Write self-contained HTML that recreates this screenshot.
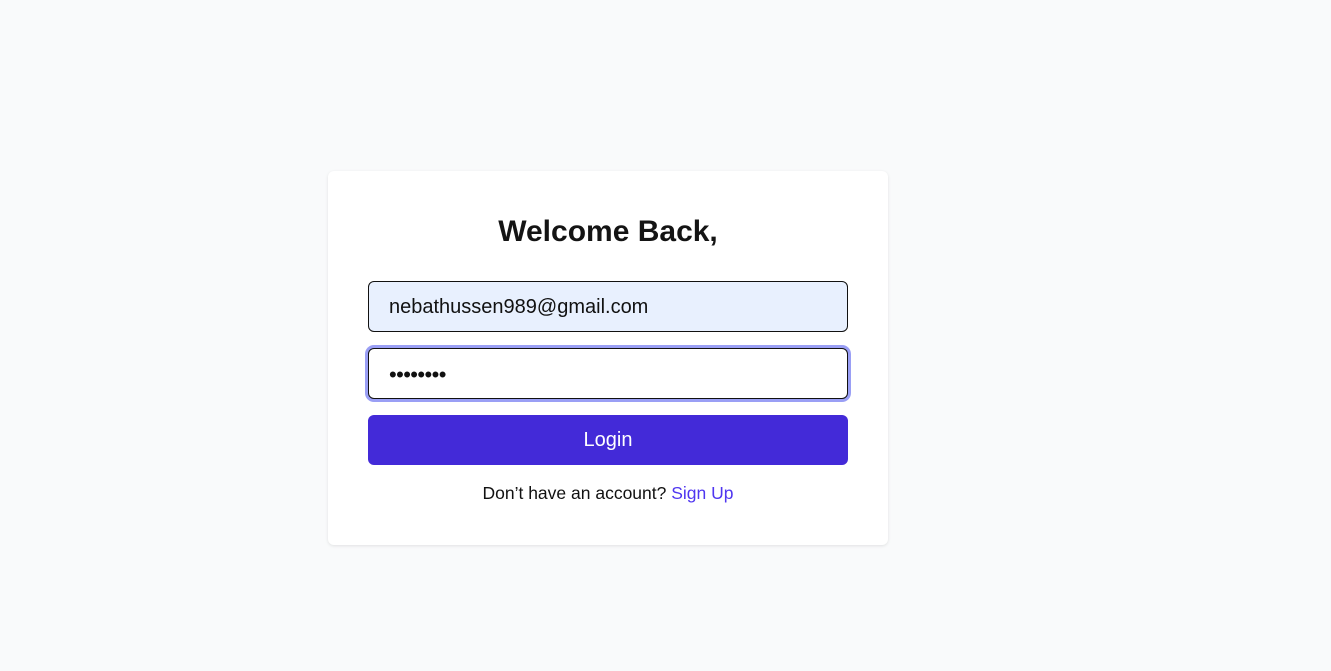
<!DOCTYPE html>
<html><head><style>
body{margin:0;background:#f9fafb;font-family:"Liberation Sans",Arial,sans-serif;width:1331px;height:671px;position:relative}
.card{position:absolute;left:328px;top:171px;width:560px;height:374px;background:#fff;border-radius:6px;box-shadow:0 1px 3px rgba(0,0,0,.1)}
h1{position:absolute;left:0;right:0;top:44px;margin:0;text-align:center;font-size:30px;font-weight:bold;color:#141414}
.in{position:absolute;left:40px;width:458px;height:49px;border:1px solid #111;border-radius:6px;font-size:20px;line-height:51px;padding-left:20px;color:#111}
.e{top:110px;background:#e8f0fe}
.p{top:177px;background:#fff;box-shadow:0 0 0 3px #9a9ff5;font-size:22px;letter-spacing:-0.6px}
.btn{position:absolute;left:40px;top:244px;width:480px;height:50px;background:#432ad8;border-radius:6px;color:#fff;text-align:center;line-height:50px;font-size:20px}
.f{position:absolute;left:0;right:0;top:312px;text-align:center;font-size:17.5px;color:#111}
.f span{color:#4f36f0}
</style></head><body>
<div class="card">
<h1>Welcome Back,</h1>
<div class="in e">nebathussen989@gmail.com</div>
<div class="in p">••••••••</div>
<div class="btn">Login</div>
<div class="f">Don’t have an account? <span>Sign Up</span></div>
</div>
</body></html>
